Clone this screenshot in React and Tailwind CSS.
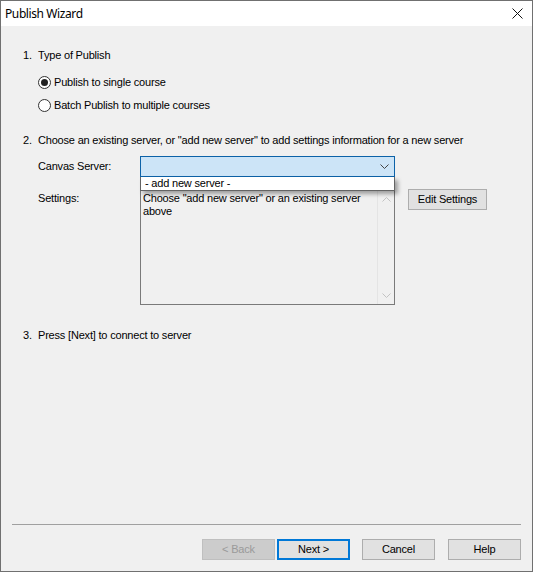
import React from 'react';

function Radio({ checked, label }) {
    return (
        <div className="flex h-[13px] items-center">
            <span className="flex h-[13px] w-[13px] items-center justify-center rounded-full border border-[#333333] bg-white">
                {checked && <span className="h-[7px] w-[7px] rounded-full bg-[#222222]" />}
            </span>
            <span className="ml-[3px] leading-[13px]">{label}</span>
        </div>
    );
}

function Step({ num, children, className = '' }) {
    return (
        <div className={`ml-[22px] flex leading-[13px] ${className}`}>
            <span className="w-[15px]">{num}</span>
            <span>{children}</span>
        </div>
    );
}

function Chevron({ down = true, color = '#444444' }) {
    return (
        <svg width="9" height="5" viewBox="0 0 9 5" className="block">
            <polyline
                points={down ? '0.5,0.5 4.5,4.5 8.5,0.5' : '0.5,4.5 4.5,0.5 8.5,4.5'}
                fill="none"
                stroke={color}
                strokeWidth="1"
            />
        </svg>
    );
}

function WinButton({ children, primary, disabled, className = '' }) {
    let look = 'border border-[#adadad] bg-[#e1e1e1] text-black';
    if (primary) look = 'border-2 border-[#0078d7] bg-[#e1e1e1] text-black';
    if (disabled) look = 'border border-[#bfbfbf] bg-[#cccccc] text-[#9a9a9a]';
    return (
        <div className={`flex h-[21px] w-[73px] items-center justify-center leading-[13px] ${look} ${className}`}>
            {children}
        </div>
    );
}

export default function App() {
    return (
        <div
            className="flex h-[572px] w-[533px] flex-col border border-[#707070] bg-[#f0f0f0] text-[11px] tracking-[-0.19px] text-black"
            style={{ fontFamily: '"Liberation Sans", Arial, sans-serif' }}
        >
            {/* Title bar */}
            <div className="flex h-[25px] items-center justify-between bg-white pl-[4px] pr-[9px]">
                <span className="text-[12px] tracking-[-0.4px]" style={{ fontFamily: '"Noto Sans", sans-serif' }}>
                    Publish Wizard
                </span>
                <svg width="11" height="11" viewBox="0 0 11 11">
                    <path d="M0.5 0.5 L10.5 10.5 M10.5 0.5 L0.5 10.5" stroke="#111111" strokeWidth="1" />
                </svg>
            </div>

            <div className="flex flex-1 flex-col">
                {/* 1. Type of publish */}
                <Step num="1." className="mt-[23px]">Type of Publish</Step>
                <div className="ml-[37px] mt-[14px]">
                    <Radio checked label="Publish to single course" />
                </div>
                <div className="ml-[37px] mt-[10px]">
                    <Radio label="Batch Publish to multiple courses" />
                </div>

                {/* 2. Server selection */}
                <Step num="2." className="mt-[22px]">
                    Choose an existing server, or "add new server" to add settings information for a new server
                </Step>

                <div className="ml-[37px] mt-[9px] flex h-[21px] items-center">
                    <span className="w-[102px] leading-[13px]">Canvas Server:</span>
                    <div className="relative h-[21px] w-[255px]">
                        <div className="flex h-full items-center justify-end border border-[#0c62a8] bg-[#cce4f7] pr-[5px]">
                            <Chevron />
                        </div>
                        <div className="absolute left-0 top-[21px] z-10 h-[14px] w-[255px] border border-t-0 border-[#646464] bg-white pl-[4px] leading-[13px] shadow-[3px_3px_4px_rgba(0,0,0,0.35)]">
                            - add new server -
                        </div>
                    </div>
                </div>

                <div className="ml-[37px] mt-[13px] flex items-start">
                    <span className="mt-[2px] w-[102px] leading-[13px]">Settings:</span>
                    <div className="flex h-[115px] w-[255px] border border-[#7a7a7a] bg-[#f0f0f0]">
                        <div className="flex-1 pl-[2px] pt-[1px] leading-[13px]">
                            Choose "add new server" or an existing server above
                        </div>
                        <div className="flex w-[17px] flex-col items-center justify-between border-l border-[#e4e4e4] py-[6px]">
                            <Chevron down={false} color="#c2c2c2" />
                            <Chevron color="#c2c2c2" />
                        </div>
                    </div>
                    <WinButton className="-mt-[1px] ml-[13px] w-[79px]">Edit Settings</WinButton>
                </div>

                {/* 3. Connect */}
                <Step num="3." className="mt-[24px]">Press [Next] to connect to server</Step>

                <div className="flex-1" />

                <div className="ml-[11px] mr-[11px] h-px bg-[#a0a0a0]" />

                <div className="mb-[11px] mr-[11px] mt-[14px] flex justify-end">
                    <WinButton disabled>&lt; Back</WinButton>
                    <WinButton primary className="ml-[2px]">Next &gt;</WinButton>
                    <WinButton className="ml-[12px]">Cancel</WinButton>
                    <WinButton className="ml-[13px]">Help</WinButton>
                </div>
            </div>
        </div>
    );
}
